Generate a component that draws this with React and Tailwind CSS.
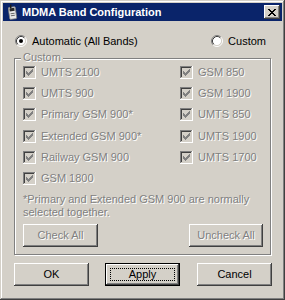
import React from 'react';

const raised =
  'shadow-[inset_-1px_-1px_#404040,inset_1px_1px_#ffffff,inset_-2px_-2px_#808080,inset_2px_2px_#d4d0c8]';
const dim = 'text-[#808080] [text-shadow:1px_1px_0_#ffffff]';

function Check() {
  const marks = [2, 3, 4, 3, 2, 1, 0];
  return (
    <svg width="13" height="13" viewBox="0 0 13 13" shapeRendering="crispEdges" className="shrink-0">
      <rect x="0" y="0" width="13" height="13" fill="#ffffff" />
      <rect x="0" y="0" width="12" height="12" fill="#808080" />
      <rect x="1" y="1" width="11" height="11" fill="#d4d0c8" />
      <rect x="1" y="1" width="10" height="10" fill="#404040" />
      <rect x="2" y="2" width="9" height="9" fill="#d4d0c8" />
      {marks.map((m, i) => (
        <rect key={i} x={3 + i} y={3 + m} width="1" height="3" fill="#808080" />
      ))}
    </svg>
  );
}

function Radio({ on }) {
  return (
    <svg width="12" height="12" viewBox="0 0 12 12" className="shrink-0">
      <circle cx="6" cy="6" r="4.5" fill="#ffffff" />
      <path d="M2.11 9.89 A5.5 5.5 0 0 1 9.89 2.11" fill="none" stroke="#808080" />
      <path d="M9.89 2.11 A5.5 5.5 0 0 1 2.11 9.89" fill="none" stroke="#ffffff" />
      <path d="M2.82 9.18 A4.5 4.5 0 0 1 9.18 2.82" fill="none" stroke="#404040" />
      <path d="M9.18 2.82 A4.5 4.5 0 0 1 2.82 9.18" fill="none" stroke="#d4d0c8" />
      {on && <circle cx="6" cy="6" r="2" fill="#000000" />}
    </svg>
  );
}

function Band({ label }) {
  return (
    <div className="flex items-center h-[13px]">
      <Check />
      <span className={`ml-[5px] leading-[13px] ${dim}`}>{label}</span>
    </div>
  );
}

function Btn({ children, disabled, width = 'w-[75px]' }) {
  return (
    <div className={`${width} h-[23px] bg-[#d4d0c8] ${raised} flex items-center justify-center ${disabled ? dim : 'text-black'}`}>
      {children}
    </div>
  );
}

export default function App() {
  const left = ['UMTS 2100', 'UMTS 900', 'Primary GSM 900*', 'Extended GSM 900*', 'Railway GSM 900', 'GSM 1800'];
  const right = ['GSM 850', 'GSM 1900', 'UMTS 850', 'UMTS 1900', 'UMTS 1700'];

  return (
    <div className="w-[285px] h-[300px] bg-[#d4d0c8] p-[3px] flex flex-col font-['Liberation_Sans',Arial,sans-serif] text-[11px] text-black shadow-[inset_-1px_-1px_#404040,inset_1px_1px_#d4d0c8,inset_-2px_-2px_#808080,inset_2px_2px_#ffffff]">
      {/* Title bar */}
      <div className="h-[18px] bg-[#0a246a] flex items-center pl-[5px] pr-[2px]">
        <svg width="10" height="16" viewBox="0 0 10 16" className="shrink-0">
          <rect x="1" y="3" width="7" height="12" rx="1" fill="#e8e8e8" stroke="#808080" strokeWidth="0.8" transform="rotate(-8 5 9)" />
          <rect x="2" y="4" width="5" height="3" fill="#2a2a2a" transform="rotate(-8 5 9)" />
          <rect x="2" y="0.5" width="1.4" height="4" fill="#1a1a1a" />
          <rect x="2.5" y="9" width="4" height="1" fill="#6a6a6a" transform="rotate(-8 5 9)" />
          <rect x="2.5" y="11" width="4" height="1" fill="#6a6a6a" transform="rotate(-8 5 9)" />
        </svg>
        <span className="ml-[4px] text-white font-bold leading-[18px]">MDMA Band Configuration</span>
        <div className={`ml-auto w-[16px] h-[14px] bg-[#d4d0c8] ${raised} flex items-center justify-center`}>
          <svg width="8" height="7" viewBox="0 0 8 7" shapeRendering="crispEdges">
            <path d="M0 0h2v1h-2zM6 0h2v1h-2zM1 1h2v1h-2zM5 1h2v1h-2zM2 2h4v1h-4zM3 3h2v1h-2zM2 4h4v1h-4zM1 5h2v1h-2zM5 5h2v1h-2zM0 6h2v1h-2zM6 6h2v1h-2z" fill="#000000" />
          </svg>
        </div>
      </div>

      {/* Mode radios */}
      <div className="mt-[14px] h-[12px] flex items-center pl-[12px]">
        <Radio on />
        <span className="ml-[5px]">Automatic (All Bands)</span>
        <div className="ml-auto mr-[16px] flex items-center">
          <Radio />
          <span className="ml-[5px]">Custom</span>
        </div>
      </div>

      {/* Custom group */}
      <div className="relative mt-[11px] ml-[11px] w-[257px] h-[197px] border border-[#808080] shadow-[inset_1px_1px_#ffffff,1px_1px_#ffffff] pt-[7px] pl-[8px] pr-[7px] flex flex-col">
        <span className={`absolute top-[-8px] left-[6px] px-[2px] bg-[#d4d0c8] leading-[13px] ${dim}`}>Custom</span>
        <div className="grid grid-cols-[157px_1fr] grid-rows-[21px_21px_22px_21px_21px_13px] items-start">
          {left.map((b, i) => (
            <React.Fragment key={b}>
              <Band label={b} />
              {right[i] ? <Band label={right[i]} /> : <div />}
            </React.Fragment>
          ))}
        </div>
        <p className={`mt-[8px] leading-[13px] ${dim}`}>
          *Primary and Extended GSM 900 are normally
          <br />
          selected together.
        </p>
        <div className="mt-[5px] flex justify-between">
          <Btn disabled>Check All</Btn>
          <Btn disabled width="w-[74px]">Uncheck All</Btn>
        </div>
      </div>

      {/* Dialog buttons */}
      <div className="mt-[8px] ml-[11px] flex">
        <Btn>OK</Btn>
        <div className="relative ml-[16px] w-[75px] h-[23px] border border-black bg-[#d4d0c8]">
          <div className={`w-full h-full ${raised} flex items-center justify-center`}>Apply</div>
          <div className="absolute inset-[4px] border border-dotted border-black" />
        </div>
        <div className="ml-[17px]">
          <Btn>Cancel</Btn>
        </div>
      </div>
    </div>
  );
}
